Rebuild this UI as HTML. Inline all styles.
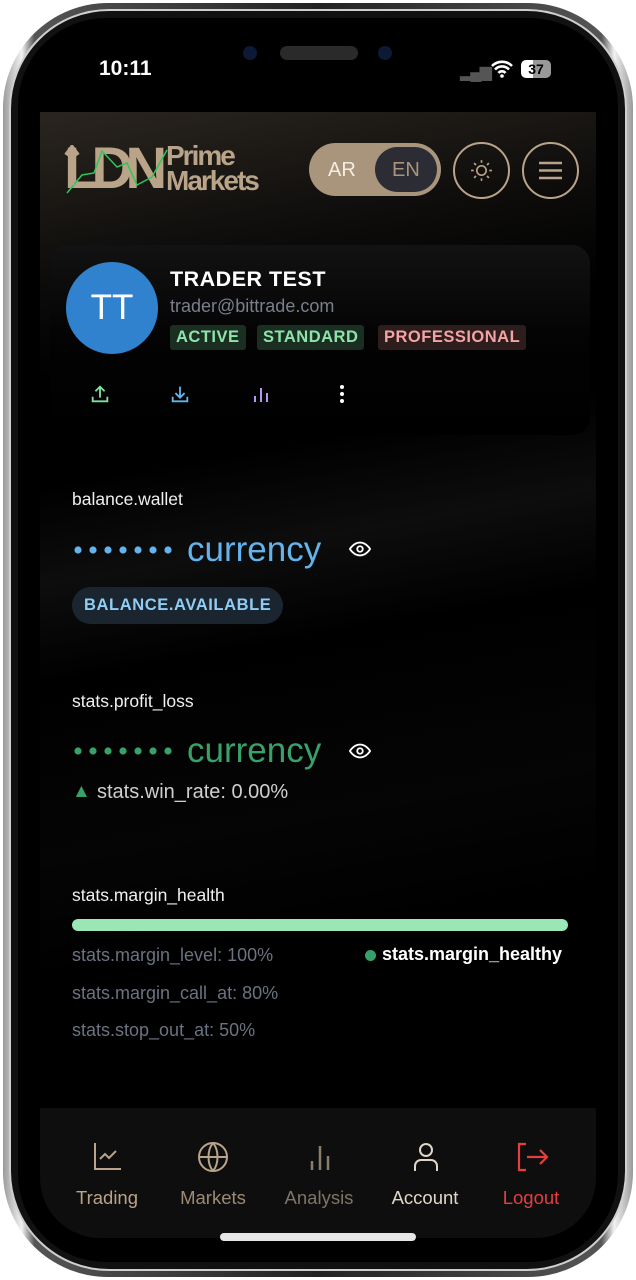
<!DOCTYPE html>
<html><head><meta charset="utf-8"><style>
*{margin:0;padding:0;box-sizing:border-box}
body{width:636px;height:1280px;background:#fff;position:relative;overflow:hidden;font-family:"Liberation Sans",sans-serif}
.frame{position:absolute;left:3px;top:3px;width:630px;height:1274px;border-radius:105px;background:linear-gradient(90deg,#9a9a9a,#f2f2f2 3%,#555 5%,#222 50%,#555 95%,#f2f2f2 97%,#9a9a9a);}
.frame2{position:absolute;left:9px;top:9px;width:618px;height:1262px;border-radius:100px;background:#111;border:2px solid #cfcfcf}
.screen{position:absolute;left:18px;top:18px;width:600px;height:1244px;border-radius:88px;background:#000;overflow:hidden}
.app{position:absolute;left:22px;top:94px;width:556px;height:1150px;background:linear-gradient(170deg,#2a251f 0%,#0c0b0a 14%,#000 22%,#000 30%,#0d0d0d 38%,#000 46%,#050505 60%,#000 70%,#000 100%);}
.t{position:absolute;white-space:nowrap}
.tag{position:absolute;top:325px;height:25px;font-weight:bold;font-size:16.5px;line-height:25px;padding:0 6px;border-radius:3px;letter-spacing:.5px}
.lbl{color:#f0f0f0;font-size:17.5px}
.nav{position:absolute;left:40px;top:1108px;width:556px;height:130px;background:#0e0e0e;border-radius:0 0 60px 60px}
.ni{position:absolute;top:1187px;font-size:18.5px;width:110px;text-align:center}
.cur{font-size:35px;letter-spacing:0}
</style></head><body>
<div class="frame"></div><div class="frame2"></div>
<div class="screen"><div class="app"></div></div>
<div class="t" style="left:280px;top:46px;width:78px;height:14px;border-radius:7px;background:#2a2a2a"></div>
<div class="t" style="left:243px;top:46px;width:14px;height:14px;border-radius:7px;background:#0c1a35"></div>
<div class="t" style="left:378px;top:46px;width:14px;height:14px;border-radius:7px;background:#0c1a35"></div>
<div class="t" style="left:99px;top:57px;color:#fff;font-size:21px;font-weight:bold">10:11</div>
<div class="t" style="left:460px;top:62px;color:#555;font-size:16px;letter-spacing:-2px">▂▄▆</div>
<svg class="t" style="left:490px;top:60px" width="24" height="18" viewBox="0 0 24 18"><path d="M2 6a14 14 0 0 1 20 0M5 9.5a9.5 9.5 0 0 1 14 0M8.5 13a4.5 4.5 0 0 1 7 0" stroke="#fff" stroke-width="2.6" fill="none"/><circle cx="12" cy="16" r="1.8" fill="#fff"/></svg>
<div class="t" style="left:521px;top:60px;width:30px;height:18px;border-radius:5px;background:linear-gradient(90deg,#fff 40%,#999 40%);color:#000;font-size:14px;font-weight:bold;text-align:center;line-height:18px">37</div>
<!-- logo -->
<div class="t" style="left:64px;top:140px;font-size:58px;font-weight:bold;letter-spacing:-8px;color:#b9a489;line-height:58px">LDN</div>
<svg class="t" style="left:62px;top:145px" width="110" height="50"><polyline points="5,48 20,30 32,28 40,6 55,22 65,18 75,40 90,32 105,5" stroke="#2cc65a" stroke-width="1.5" fill="none"/><path d="M10 40V2M4 10l6-8 6 8" stroke="#b9a489" stroke-width="4" fill="none"/></svg>
<div class="t" style="left:166px;top:143px;font-size:28px;font-weight:bold;color:#b9a489;line-height:25px;letter-spacing:-2px">Prime<br>Markets</div>
<!-- toggle -->
<div class="t" style="left:309px;top:143px;width:132px;height:53px;border-radius:27px;background:#a8957c"></div>
<div class="t" style="left:375px;top:147px;width:62px;height:45px;border-radius:23px;background:#2c2c35"></div>
<div class="t" style="left:328px;top:159px;color:#f3ede5;font-size:20px">AR</div>
<div class="t" style="left:392px;top:159px;color:#a8957c;font-size:20px">EN</div>
<div class="t" style="left:453px;top:142px;width:57px;height:57px;border-radius:50%;border:2.5px solid #b9a489"></div>
<svg class="t" style="left:469px;top:158px" width="25" height="25" viewBox="0 0 24 24" stroke="#b9a489" stroke-width="1.6" fill="none"><circle cx="12" cy="12" r="4.5"/><path d="M12 2v2.5M12 19.5V22M2 12h2.5M19.5 12H22M4.9 4.9l1.8 1.8M17.3 17.3l1.8 1.8M4.9 19.1l1.8-1.8M17.3 6.7l1.8-1.8"/></svg>
<div class="t" style="left:522px;top:142px;width:57px;height:57px;border-radius:50%;border:2.5px solid #b9a489"></div>
<svg class="t" style="left:538px;top:160px" width="25" height="21"><path d="M1 3h23M1 10.5h23M1 18h23" stroke="#b9a489" stroke-width="2.4"/></svg>
<!-- profile card -->
<div class="t" style="left:50px;top:245px;width:540px;height:190px;border-radius:18px;background:linear-gradient(180deg,#121212,#030303 50%,#000)"></div>
<div class="t" style="left:66px;top:262px;width:92px;height:92px;border-radius:50%;background:#3182ce;color:#fff;font-size:35px;text-align:center;line-height:92px">TT</div>
<div class="t" style="left:170px;top:267px;color:#fff;font-size:21.5px;font-weight:bold;letter-spacing:.5px">TRADER TEST</div>
<div class="t" style="left:170px;top:296px;color:#7a7f8c;font-size:18px">trader@bittrade.com</div>
<div class="tag" style="left:170px;background:#1b2e22;color:#8ee4a8">ACTIVE</div>
<div class="tag" style="left:257px;background:#1b2e22;color:#8ee4a8">STANDARD</div>
<div class="tag" style="left:378px;background:#2e1d1d;color:#f3a3a3">PROFESSIONAL</div>
<svg class="t" style="left:89px;top:383px" width="22" height="22" viewBox="0 0 24 24" stroke="#7fe0a4" stroke-width="2" fill="none"><path d="M4 15v5h16v-5M12 16V4M7 9l5-5 5 5"/></svg>
<svg class="t" style="left:169px;top:383px" width="22" height="22" viewBox="0 0 24 24" stroke="#63b3ed" stroke-width="2" fill="none"><path d="M4 15v5h16v-5M12 4v12M7 11l5 5 5-5"/></svg>
<svg class="t" style="left:251px;top:384px" width="20" height="20" viewBox="0 0 20 20" stroke="#b794f4" stroke-width="2"><path d="M4 18v-6M10 18V4M16 18v-9"/></svg>
<svg class="t" style="left:338px;top:384px" width="8" height="20"><circle cx="4" cy="3" r="2" fill="#fff"/><circle cx="4" cy="10" r="2" fill="#fff"/><circle cx="4" cy="17" r="2" fill="#fff"/></svg>
<!-- balance -->
<div class="t lbl" style="left:72px;top:489px">balance.wallet</div>
<svg class="t" style="left:72px;top:544px" width="104" height="12" fill="#63b3ed"><circle cx="6" cy="6" r="3.6"/><circle cx="21" cy="6" r="3.6"/><circle cx="36" cy="6" r="3.6"/><circle cx="51" cy="6" r="3.6"/><circle cx="66" cy="6" r="3.6"/><circle cx="81" cy="6" r="3.6"/><circle cx="96" cy="6" r="3.6"/></svg>
<div class="t cur" style="left:187px;top:530px;color:#63b3ed">currency</div>
<svg class="t" style="left:349px;top:540px" width="22" height="18" viewBox="0 0 24 18" stroke="#fff" stroke-width="2" fill="none"><path d="M1 9s4-7 11-7 11 7 11 7-4 7-11 7S1 9 1 9z"/><circle cx="12" cy="9" r="3"/></svg>
<div class="t" style="left:72px;top:587px;height:37px;padding:0 12px;border-radius:19px;background:#1a2530;color:#90cdf4;font-weight:bold;font-size:16.5px;line-height:37px;letter-spacing:.6px">BALANCE.AVAILABLE</div>
<!-- pnl -->
<div class="t lbl" style="left:72px;top:691px">stats.profit_loss</div>
<svg class="t" style="left:72px;top:745px" width="104" height="12" fill="#38a169"><circle cx="6" cy="6" r="3.6"/><circle cx="21" cy="6" r="3.6"/><circle cx="36" cy="6" r="3.6"/><circle cx="51" cy="6" r="3.6"/><circle cx="66" cy="6" r="3.6"/><circle cx="81" cy="6" r="3.6"/><circle cx="96" cy="6" r="3.6"/></svg>
<div class="t cur" style="left:187px;top:731px;color:#38a169">currency</div>
<svg class="t" style="left:349px;top:742px" width="22" height="18" viewBox="0 0 24 18" stroke="#fff" stroke-width="2" fill="none"><path d="M1 9s4-7 11-7 11 7 11 7-4 7-11 7S1 9 1 9z"/><circle cx="12" cy="9" r="3"/></svg>
<div class="t" style="left:72px;top:781px;color:#38a169;font-size:19px">▲</div>
<div class="t" style="left:97px;top:781px;color:#cfcfcf;font-size:20px">stats.win_rate: 0.00%</div>
<!-- margin -->
<div class="t lbl" style="left:72px;top:885px">stats.margin_health</div>
<div class="t" style="left:72px;top:919px;width:496px;height:12px;border-radius:6px;background:#9ae6b4"></div>
<div class="t" style="left:72px;top:945px;color:#6b7280;font-size:18px">stats.margin_level: 100%</div>
<div class="t" style="left:365px;top:950px;width:11px;height:11px;border-radius:50%;background:#38a169"></div>
<div class="t" style="left:382px;top:944px;color:#fff;font-size:18px;font-weight:bold">stats.margin_healthy</div>
<div class="t" style="left:72px;top:983px;color:#6b7280;font-size:18px">stats.margin_call_at: 80%</div>
<div class="t" style="left:72px;top:1020px;color:#6b7280;font-size:18px">stats.stop_out_at: 50%</div>
<!-- nav -->
<div class="nav"></div>
<svg class="t" style="left:93px;top:1141px" width="30" height="30" viewBox="0 0 30 30" stroke="#b9a489" stroke-width="2" fill="none"><path d="M2 2v26h26M7 18l5-5 4 4 7-7"/></svg>
<svg class="t" style="left:197px;top:1141px" width="32" height="32" viewBox="0 0 32 32" stroke="#b9a489" stroke-width="2" fill="none"><circle cx="16" cy="16" r="14"/><path d="M2 16h28M16 2c-6 7-6 21 0 28M16 2c6 7 6 21 0 28"/></svg>
<svg class="t" style="left:308px;top:1144px" width="24" height="26" stroke="#8a7d6c" stroke-width="2.5"><path d="M4 26v-9M12 26V2M20 26V12"/></svg>
<svg class="t" style="left:413px;top:1142px" width="26" height="30" viewBox="0 0 26 30" stroke="#e0d6c8" stroke-width="2" fill="none"><circle cx="13" cy="8" r="6"/><path d="M2 29v-5a6 6 0 0 1 6-6h10a6 6 0 0 1 6 6v5"/></svg>
<svg class="t" style="left:517px;top:1142px" width="32" height="30" viewBox="0 0 32 30" stroke="#e53e3e" stroke-width="2.2" fill="none"><path d="M9 2H2v26h7M10 15h20M23 8l7 7-7 7"/></svg>
<div class="t ni" style="left:52px;color:#b9a489">Trading</div>
<div class="t ni" style="left:158px;color:#9c8a74">Markets</div>
<div class="t ni" style="left:264px;color:#7f7467">Analysis</div>
<div class="t ni" style="left:370px;color:#e0d6c8">Account</div>
<div class="t ni" style="left:476px;color:#e53e3e">Logout</div>
<div class="t" style="left:220px;top:1233px;width:196px;height:8px;border-radius:4px;background:#e6e6e6"></div>
</body></html>
